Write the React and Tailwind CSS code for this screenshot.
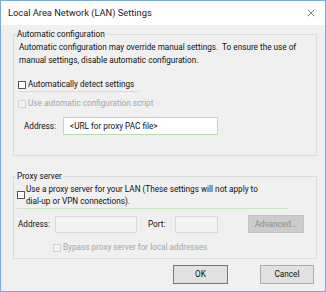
import { X } from "lucide-react";

function Check({ disabled = false }) {
  return (
    <span
      className={
        "inline-block h-[8px] w-[8px] shrink-0 border " +
        (disabled ? "border-[#d2d2d2] bg-[#f4f4f4]" : "border-[#555] bg-white")
      }
    />
  );
}

function GroupBox({ label, className = "", children }) {
  return (
    <fieldset className={"ml-[12px] w-[304px] border border-[#dcdcdc] " + className}>
      <legend className="ml-[2px] px-[1px] leading-[13px]">{label}</legend>
      {children}
    </fieldset>
  );
}

export default function App() {
  return (
    <div
      className="flex h-[292px] w-[326px] flex-col whitespace-nowrap border border-[#79aadd] bg-[#f0f0f0] text-[8.2px] font-normal text-[#111]"
      style={{ fontFamily: 'Roboto, "Liberation Sans", Arial, sans-serif' }}
    >
      <div className="flex h-[24px] shrink-0 items-center justify-between bg-white pl-[7px] pr-[8px]">
        <span className="text-[9.3px] text-[#222]">Local Area Network (LAN) Settings</span>
        <X size={12} strokeWidth={1.2} className="text-[#333]" />
      </div>

      <GroupBox label="Automatic configuration" className="mt-[3px] h-[128px]">
        <p className="pl-[5px] leading-[13px]">
          Automatic configuration may override manual settings.&nbsp; To ensure the use of
          <br />
          manual settings, disable automatic configuration.
        </p>

        <div className="ml-[4px] mt-[11px] flex h-[14px] w-[121px] items-center gap-[2px] border-b border-[#c9e7c1]">
          <Check />
          <span>Automatically detect settings</span>
        </div>

        <div className="ml-[4px] mt-[5px] flex h-[13px] items-center gap-[2px] text-[#a6a6a6]">
          <Check disabled />
          <span>Use automatic configuration script</span>
        </div>

        <div className="mt-[7px] flex items-center">
          <span className="w-[49px] pl-[10px]">Address:</span>
          <div className="flex h-[18px] w-[155px] items-center border border-[#cfcfcf] border-b-[#b9dcb0] bg-white pl-[6px]">
            &lt;URL for proxy PAC file&gt;
          </div>
        </div>
      </GroupBox>

      <GroupBox label="Proxy server" className="mt-[14px] h-[89px]">
        <div className="ml-[3px] flex w-[271px] items-center gap-[1px] border-b border-[#c9e7c1] pb-[1px]">
          <Check />
          <span className="leading-[12px]">
            Use a proxy server for your LAN (These settings will not apply to
            <br />
            dial-up or VPN connections).
          </span>
        </div>

        <div className="mt-[6px] flex items-center">
          <span className="w-[41px] pl-[4px]">Address:</span>
          <div className="h-[17px] w-[82px] border border-[#dadada] bg-[#f3f3f3]" />
          <span className="w-[38px] pl-[11px]">Port:</span>
          <div className="h-[17px] w-[43px] border border-[#dadada] bg-[#f3f3f3]" />
          <div className="ml-[30px] flex h-[18px] w-[56px] items-center justify-center border border-[#c4c4c4] bg-[#cccccc] text-[#8a8a8a]">
            Advanced...
          </div>
        </div>

        <div className="ml-[39px] mt-[8px] flex h-[13px] items-center gap-[2px] text-[#a6a6a6]">
          <Check disabled />
          <span>Bypass proxy server for local addresses</span>
        </div>
      </GroupBox>

      <div className="mt-[6px] flex justify-end gap-[32px] pr-[11px]">
        <button className="flex h-[19px] w-[55px] items-center justify-center border border-[#3f86c6] bg-[#e1e1e1]">
          OK
        </button>
        <button className="flex h-[19px] w-[54px] items-center justify-center border border-[#adadad] bg-[#e1e1e1]">
          Cancel
        </button>
      </div>
    </div>
  );
}
